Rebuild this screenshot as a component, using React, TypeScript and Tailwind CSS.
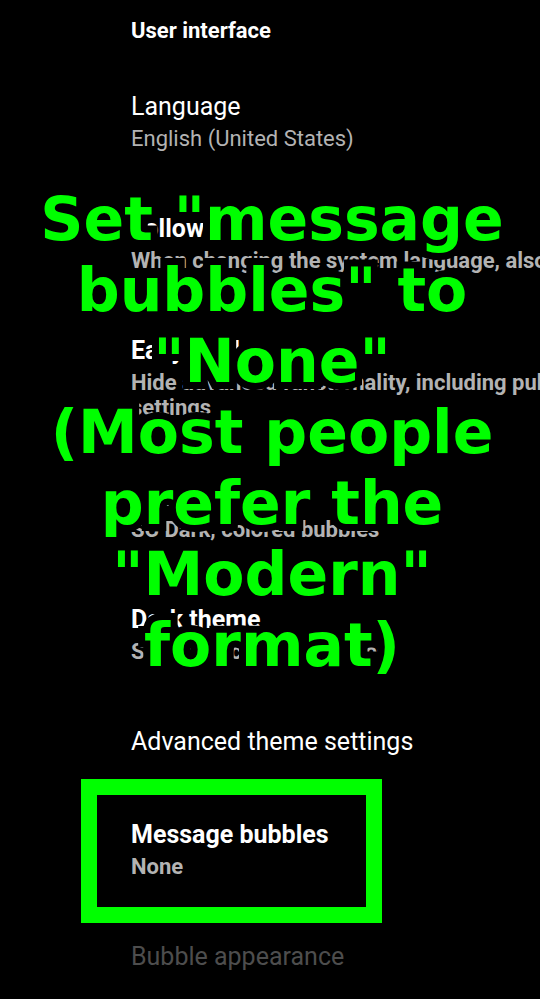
import React from "react";

type Setting = {
  title: string;
  summary?: string[];
  bold?: boolean;
  disabled?: boolean;
  highlighted?: boolean;
};

const settings: Setting[] = [
  { title: "Language", summary: ["English (United States)"] },
  {
    title: "Follow system",
    summary: ["When changing the system language, also change the app language"],
    bold: true,
  },
  {
    title: "Easy mode",
    summary: ["Hide advanced functionality, including public rooms and developer", "settings"],
    bold: true,
  },
  { title: "Light theme", summary: ["SC Dark, colored bubbles"], bold: true },
  { title: "Dark theme", summary: ["SC Black, colored bubbles"], bold: true },
  { title: "Advanced theme settings" },
  { title: "Message bubbles", summary: ["None"], bold: true, highlighted: true },
  { title: "Bubble appearance", disabled: true },
];

const captionLines = [
  'Set "message',
  'bubbles" to',
  '"None"',
  "(Most people",
  "prefer the",
  '"Modern"',
  "format)",
];

function SettingRow({ title, summary, bold, disabled, highlighted }: Setting) {
  return (
    <li className="relative">
      <button
        type="button"
        disabled={disabled}
        className={`flex w-full flex-col gap-1 pt-[31px] pb-8 pl-[131px] text-left whitespace-nowrap ${
          bold ? "font-bold" : "font-normal"
        }`}
      >
        <span className={`text-[25px] leading-[30px] ${disabled ? "text-[#4d4d4d]" : "text-white"}`}>
          {title}
        </span>
        {summary && (
          <span className="text-[22px] leading-[25px] text-[#b3b3b3]">
            {summary.map((line) => (
              <span key={line} className="block">
                {line}
              </span>
            ))}
          </span>
        )}
      </button>
      {highlighted && (
        <div className="pointer-events-none absolute -top-2.5 -bottom-3 left-[81px] w-[301px] border-[16px] border-[#00ff00]" />
      )}
    </li>
  );
}

export default function App() {
  return (
    <main className="relative min-h-screen overflow-hidden bg-black font-['Roboto',sans-serif]">
      <h1 className="pt-[15px] pb-[14px] pl-[131px] text-[22px] leading-[32px] font-bold text-white">
        User interface
      </h1>
      <ul>
        {settings.map((setting) => (
          <SettingRow key={setting.title} {...setting} />
        ))}
      </ul>
      <p className="pointer-events-none absolute inset-x-0 top-[184px] pl-1 text-center font-['DejaVu_Sans',sans-serif] text-[60px] leading-[71px] font-bold whitespace-nowrap text-[#00ff00] [-webkit-text-stroke:14px_black] [paint-order:stroke_fill]">
        {captionLines.map((line) => (
          <span key={line} className="block">
            {line}
          </span>
        ))}
      </p>
    </main>
  );
}
